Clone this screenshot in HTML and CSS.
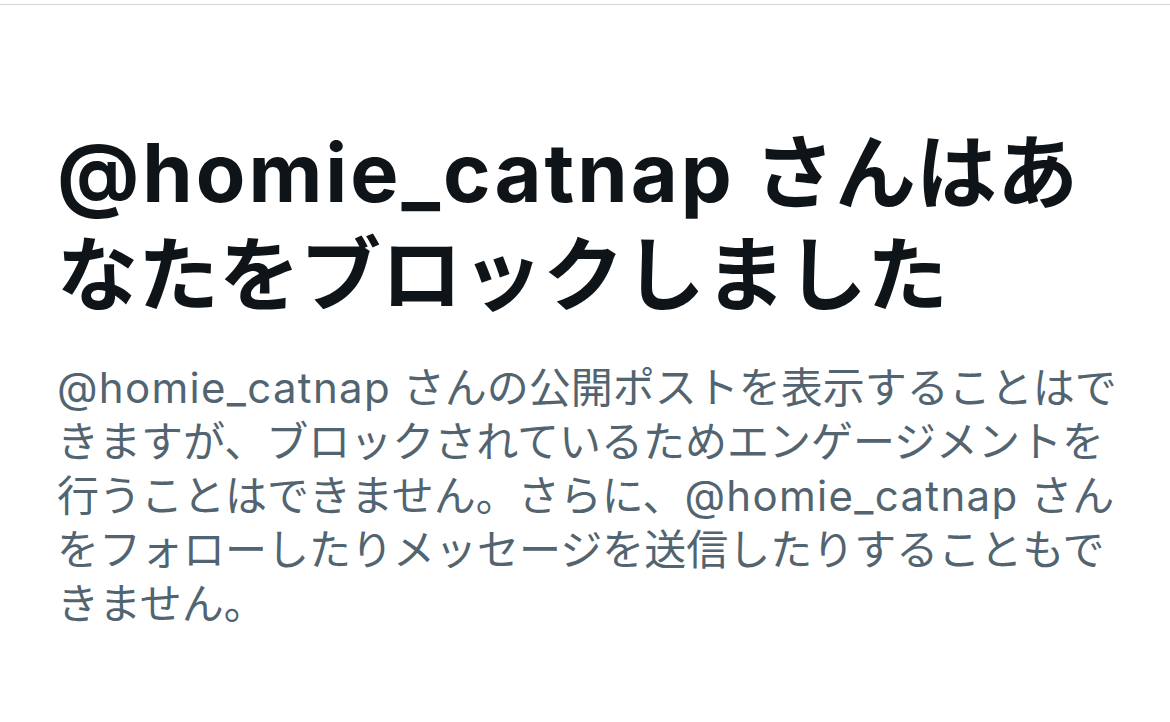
FILE: index.html
```html
<!DOCTYPE html>
<html lang="ja">
<head>
<meta charset="utf-8">
<link rel="stylesheet" href="styles.css">
</head>
<body>
<div class="topbar"></div>
<main class="notice">
  <h1 class="title"><span class="handle">@homie_catnap</span> さんはあ<br>なたをブロックしました</h1>
  <p class="desc"><span class="handle">@homie_catnap</span> さんの公開ポストを表示することはで<br>きますが、ブロックされているためエンゲージメントを<br>行うことはできません。さらに、<span class="handle">@homie_catnap</span> さん<br>をフォローしたりメッセージを送信したりすることもで<br>きません。</p>
</main>
</body>
</html>
```
FILE: styles.css
```css
html, body {
  margin: 0;
  padding: 0;
  background: #ffffff;
}
body {
  font-family: Inter, "Noto Sans CJK JP", sans-serif;
}
.topbar {
  height: 4px;
  border-bottom: 1px solid #d6d6d6;
}
.notice {
  padding: 117px 40px 0 57px;
  display: flex;
  flex-direction: column;
  gap: 35px;
}
.title {
  margin: 0;
  font-size: 81px;
  line-height: 102px;
  font-weight: 700;
  color: #0f1419;
  white-space: nowrap;
}
.title .handle {
  letter-spacing: 3px;
}
.desc {
  margin: 0;
  font-size: 42px;
  line-height: 54px;
  font-weight: 400;
  color: #536471;
  white-space: nowrap;
}
.desc .handle {
  letter-spacing: 1.3px;
}
```
